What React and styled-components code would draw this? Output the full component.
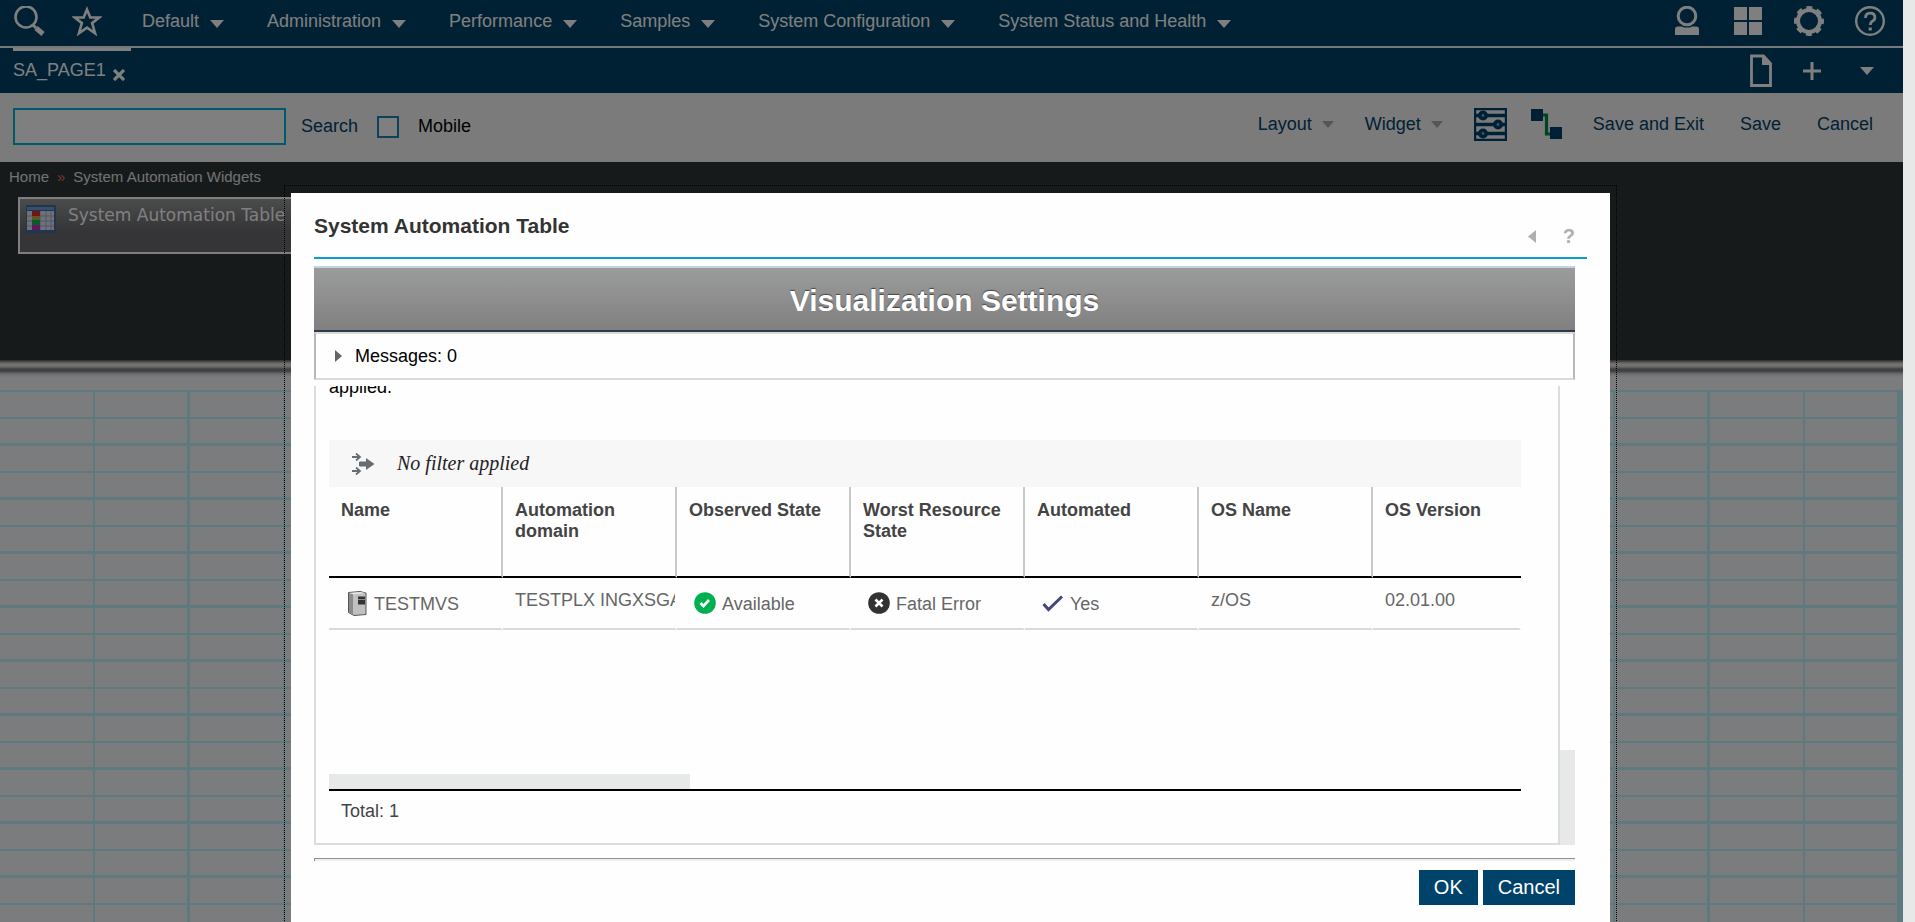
import React from 'react';
import styled, { createGlobalStyle } from 'styled-components';

const GlobalStyle = createGlobalStyle`
  * { box-sizing: border-box; }
  body {
    margin: 0;
    font-family: "Liberation Sans", Arial, sans-serif;
    font-size: 18px;
    line-height: 21px;
    color: #000;
  }
  button, input { font: inherit; color: inherit; margin: 0; }
  a { color: inherit; text-decoration: none; }
  svg { display: block; flex: none; }
`;

const Shell = styled.div`
  display: flex;
  height: 100vh;
  overflow: hidden;
`;

const Page = styled.div`
  position: relative;
  flex: 1;
  min-width: 0;
  display: flex;
  flex-direction: column;
  overflow: hidden;
`;

const PageScroll = styled.div`
  width: 12px;
  background: #e7e9e8;
`;

const PlainButton = styled.button`
  display: flex;
  align-items: center;
  gap: ${(p) => p.$gap || 0}px;
  padding: 0;
  border: 0;
  background: none;
  white-space: nowrap;
  line-height: 21px;
`;

const NavBar = styled.header`
  display: flex;
  align-items: flex-start;
  height: 48px;
  padding: 6px 18px 0 14px;
  background: #004266;
  border-bottom: 2px solid #eaf2f8;
  color: #fff;
`;

const QuickTools = styled.div`
  display: flex;
  gap: 27px;
  margin-right: 40px;
`;

const Menu = styled.nav`
  display: flex;
  gap: 43px;
  padding-top: 5px;
`;

const MenuButton = styled(PlainButton)`
  gap: 11px;
  svg { margin-top: 5px; }
`;

const NavIcons = styled.div`
  display: flex;
  gap: 31px;
  margin-left: auto;
`;

const NavIconButton = styled(PlainButton)`
  justify-content: center;
  width: 30px;
`;

const TabBar = styled.div`
  display: flex;
  align-items: flex-start;
  height: 45px;
  padding: 0 29px 0 13px;
  background: #004266;
  color: #fff;
`;

const Tab = styled.div`
  display: flex;
  align-items: flex-end;
  gap: 7px;
  width: 118px;
  padding-top: 9px;
  border-top: 3px solid #fff;
`;

const TabTools = styled.div`
  display: flex;
  align-items: center;
  gap: 31px;
  margin: 6px 0 0 auto;
`;

const TabMenuButton = styled(PlainButton)`
  margin-left: 8px;
`;

const Toolbar = styled.div`
  display: flex;
  align-items: center;
  height: 69px;
  padding: 0 30px 2px 13px;
  background: #f7f7f7;
  color: #00426b;
`;

const SearchInput = styled.input`
  width: 273px;
  height: 37px;
  border: 2px solid #00b4da;
  background: #fff;
`;

const SearchButton = styled(PlainButton)`
  margin: 0 19px 0 15px;
`;

const CheckLabel = styled.label`
  display: flex;
  align-items: center;
  gap: 19px;
  color: #000;
`;

const CheckInput = styled.input`
  appearance: none;
  width: 22px;
  height: 22px;
  border: 2px solid #1f82b4;
  background: #fff;
`;

const ToolbarEnd = styled.div`
  display: flex;
  align-items: center;
  gap: 31px;
  margin-left: auto;
  padding-bottom: 4px;
`;

const ToolIcons = styled.div`
  display: flex;
  gap: 24px;
`;

const SaveActions = styled.div`
  display: flex;
  gap: 36px;
`;

const Palette = styled.section`
  height: 198px;
  padding: 4px 0 0 9px;
  background: #2e3536;
  color: #fff;
`;

const Breadcrumb = styled.nav`
  display: flex;
  gap: 8px;
  font-size: 15px;
  line-height: 21px;
  color: #e4e4e4;
`;

const Chevrons = styled.span`
  color: #e86a6a;
`;

const WidgetCard = styled.button`
  display: flex;
  align-items: flex-start;
  gap: 12px;
  width: 290px;
  height: 57px;
  margin: 10px 0 0 9px;
  padding: 6px;
  border: 2px solid #fff;
  background: linear-gradient(#969898, #6a6b6e 60%);
  color: #fff;
  font-family: "DejaVu Sans", Verdana, sans-serif;
  font-size: 17px;
  white-space: nowrap;
`;

const Divider = styled.div`
  height: 30px;
  flex: none;
  background: linear-gradient(#5a5a5a 0, #7a7a7a 1px, #cfcaca 3px, #e8e2e2 4px, #e8e2e2 6px, #b0acac 8px, #808080 9px, #808080 11px, #dcdcdc 14px, #f7f8fc 17px);
`;

const Canvas = styled.main`
  --grid: #bff4ff;
  flex: 1;
  border-right: 4px solid var(--grid);
  background:
    linear-gradient(var(--grid) 0 3px, transparent 3px 28px, var(--grid) 28px 30px, transparent 30px) 0 -1px / 100% 54px,
    repeating-linear-gradient(90deg, transparent 0 93px, var(--grid) 93px 95px, transparent 95px 187px, var(--grid) 187px 190px),
    #f7f8fc;
`;

const Overlay = styled.div`
  position: absolute;
  inset: 0;
  padding: 185px 286px 0 284px;
  background: rgba(0, 0, 0, 0.5);
`;

const DialogFrame = styled.div`
  border: 1px dotted #000;
  border-bottom: 0;
  padding: 7px 6px 0;
`;

const Dialog = styled.section`
  display: flex;
  flex-direction: column;
  min-height: 760px;
  padding: 0 23px;
  background: #fefefe;
`;

const DialogHead = styled.header`
  display: flex;
  justify-content: space-between;
  height: 66px;
  padding: 20px 12px 0 0;
  border-bottom: 2px solid #0a9fcc;
`;

const DialogTitle = styled.h1`
  margin: 0;
  font-size: 21px;
  line-height: 26px;
  color: #333;
`;

const DialogTools = styled.div`
  display: flex;
  align-items: center;
  gap: 27px;
  height: 46px;
  color: #b0b0b0;
  font-size: 20px;
`;

const DialogBody = styled.div`
  margin: 7px 12px 0 0;
`;

const Banner = styled.h2`
  margin: 0;
  height: 66px;
  border-top: 2px solid #c6d2e0;
  border-bottom: 2px solid #2c3b4c;
  background: linear-gradient(#9a9c9b, #8e8e8e 50%, #808081);
  color: #fff;
  font-size: 30px;
  line-height: 66px;
  text-align: center;
  text-shadow: 0 -1px 1px #444;
`;

const Messages = styled.button`
  display: flex;
  align-items: center;
  gap: 13px;
  width: 100%;
  height: 48px;
  padding: 0 18px 0 19px;
  border: 2px solid;
  border-color: #dadada #b8b8b8;
  background: #fefefe;
`;

const ScrollArea = styled.div`
  display: flex;
  height: 459px;
  margin-top: 6px;
`;

const Pane = styled.div`
  flex: 1;
  min-width: 0;
  padding: 0 37px 0 13px;
  border: 2px solid #dcdcdc;
  border-top: 0;
  overflow: hidden;
`;

const PaneThumb = styled.div`
  align-self: flex-end;
  width: 15px;
  height: 95px;
  background: #e7e9e8;
`;

const Intro = styled.p`
  margin: -9px 0 0;
  height: 63px;
`;

const FilterBar = styled.div`
  display: flex;
  align-items: center;
  gap: 22px;
  height: 47px;
  padding-left: 23px;
  background: #f7f7f7;
  color: #222;
  font-family: Georgia, "Liberation Serif", serif;
  font-style: italic;
  font-size: 20px;
`;

const GridView = styled.div`
  display: flex;
  flex-direction: column;
  justify-content: space-between;
  height: 302px;
`;

const Table = styled.table`
  width: 100%;
  table-layout: fixed;
  border-collapse: separate;
  border-spacing: 0;
`;

const HeadCell = styled.th`
  width: ${(p) => (p.$last ? 'auto' : '174px')};
  height: 91px;
  padding: 13px 10px 0 12px;
  border-right: ${(p) => (p.$last ? 0 : '2px solid #c8c8c8')};
  border-bottom: 2px solid #000;
  vertical-align: top;
  text-align: left;
  color: #444;
`;

const Cell = styled.td`
  height: 52px;
  padding: 0 0 0 12px;
  border-right: 2px solid #fefefe;
  border-bottom: 2px solid #dadada;
  vertical-align: top;
  color: #666;
  overflow: hidden;
  white-space: nowrap;
`;

const CellText = styled.div`
  display: flex;
  align-items: center;
  height: 45px;
`;

const StatusContent = styled(CellText)`
  gap: 6px;
  height: 50px;
  padding-left: 5px;
  span { padding-top: 3px; }
`;

const SideThumb = styled.div`
  width: 361px;
  height: 15px;
  background: #e7e9e8;
`;

const Total = styled.div`
  padding: 10px 12px;
  border-top: 2px solid #000;
  color: #444;
`;

const Rule = styled.hr`
  margin: 13px 0 9px;
  height: 3px;
  border: 0;
  border-top: 1px solid #909090;
  border-left: 1px solid #909090;
  background: #eee;
`;

const Actions = styled.div`
  display: flex;
  justify-content: flex-end;
  gap: 5px;
`;

const ActionButton = styled.button`
  height: 35px;
  padding: 0 15px;
  border: 0;
  background: #00436a;
  color: #fff;
  font-size: 20px;
`;

const Caret = ({ w = 14, h = 8, color = 'currentColor' }) => (
  <svg width={w} height={h} viewBox="0 0 14 8" aria-hidden="true">
    <path d="M0 0H14L7 8Z" fill={color} />
  </svg>
);

const menus = ['Default', 'Administration', 'Performance', 'Samples', 'System Configuration', 'System Status and Health'];

const SearchIcon = () => (
  <svg width="31" height="30" viewBox="0 0 31 30" fill="none" stroke="currentColor">
    <circle cx="12" cy="11" r="10.5" strokeWidth="2.6" />
    <path d="M19 19l3 3" strokeWidth="3" />
    <path d="M22 22l7 6" strokeWidth="5" />
  </svg>
);
const StarIcon = () => (
  <svg width="30" height="30" viewBox="0 0 30 30" fill="none" stroke="currentColor" strokeWidth="2.6">
    <path d="M15 3.5l3.3 8h9l-7.2 5.6 3 10.2L15 21.6l-8.1 5.7 3-10.2L2.700 11.5h9z" />
  </svg>
);
const UserIcon = () => (
  <svg width="24" height="30" viewBox="0 0 24 30">
    <circle cx="12" cy="10" r="8.8" fill="none" stroke="currentColor" strokeWidth="3" />
    <path d="M0 29v-6q0-2.500 3-2.500h4l2 1h6l2-1h4q3 0 3 2.500v6z" fill="currentColor" />
  </svg>
);
const TilesIcon = () => (
  <svg width="28" height="30" viewBox="0 0 28 30" fill="currentColor">
    <path d="M0 1h13v13H0zM15 1h13v13H15zM0 16h13v13H0zM15 16h13v13H15z" />
  </svg>
);
const GearIcon = () => (
  <svg width="30" height="30" viewBox="0 0 30 30" fill="none" stroke="currentColor">
    <circle cx="15" cy="15" r="11" strokeWidth="4" />
    <circle cx="15" cy="15" r="13.2" strokeWidth="3.6" strokeDasharray="5.8 4.567" strokeDashoffset="2.9" />
  </svg>
);
const HelpIcon = () => (
  <svg width="30" height="30" viewBox="0 0 30 30" fill="none" stroke="currentColor">
    <circle cx="15" cy="15" r="13.8" strokeWidth="2.4" />
    <path d="M10.5 12q0-4.800 4.700-4.800t4.700 4.300q0 2.500-2.600 3.800-2 1.200-2 3.700" strokeWidth="2.8" />
    <path d="M13.600 21.500h3.200v3h-3.200z" fill="currentColor" stroke="none" />
  </svg>
);
const FileIcon = () => (
  <svg width="22" height="34" viewBox="0 0 22 34">
    <path d="M1.500 2h12l7 7.500V31.500h-19z" fill="none" stroke="currentColor" strokeWidth="2.8" />
    <path d="M12 1h2l7 8v2h-9z" fill="currentColor" />
  </svg>
);
const PlusIcon = () => (
  <svg width="18" height="18" viewBox="0 0 18 18" stroke="currentColor" strokeWidth="3">
    <path d="M9 0v18M0 9h18" />
  </svg>
);
const CloseIcon = () => (
  <svg width="12" height="12" viewBox="0 0 12 12" stroke="currentColor" strokeWidth="3.2">
    <path d="M1 1l10 10M11 1L1 11" />
  </svg>
);
const SlidersIcon = () => (
  <svg width="33" height="33" viewBox="0 0 33 33" fill="none" stroke="currentColor">
    <path d="M1 1h31v31H1z" strokeWidth="2.4" />
    <path d="M2 7.500h29M2 16.500h29M2 25.500h29" strokeWidth="3.4" />
    <circle cx="9" cy="7.500" r="3.2" strokeWidth="3.6" fill="#80a8c0" />
    <circle cx="24" cy="16.500" r="3.2" strokeWidth="3.6" fill="#80a8c0" />
    <circle cx="9" cy="25.500" r="3.2" strokeWidth="3.6" fill="#80a8c0" />
  </svg>
);
const WireIcon = () => (
  <svg width="31" height="31" viewBox="0 0 31 31">
    <path d="M12 6h3.500v19H20" fill="none" stroke="#008a46" strokeWidth="3.2" />
    <path d="M0 0h12v12H0zM19 18h12v12H19z" fill="currentColor" />
  </svg>
);
const TableIcon = () => (
  <svg width="30" height="28" viewBox="0 0 30 28">
    <rect x="0" y="0" width="30" height="28" rx="1" fill="#426a98" />
    <path d="M1 2h27v3H1z" fill="#6c9fdc" />
    <path d="M1 6h27v19H1z" fill="#dfe4f4" />
    <path d="M1 11h27M1 16h27M1 21h27M14 6v19M20 6v19M25 6v19" stroke="#a4acc8" strokeWidth="1" />
    <path d="M6 6h8v5H6z" fill="#e02828" />
    <path d="M6 11h8v4H6z" fill="#b8b040" />
    <path d="M6 15h8v5H6z" fill="#10b84c" />
    <path d="M6 20h8v5H6z" fill="#c828c0" />
  </svg>
);
const FilterIcon = () => (
  <svg width="23" height="22" viewBox="0 0 23 22" fill="none" stroke="#666c70">
    <path d="M0 4h7M0 18h7" strokeWidth="2" />
    <path d="M4 0.500l4 3.500-4 3.500M4 14.500l4 3.500-4 3.500" strokeWidth="1.8" />
    <path d="M7 9.500q0-1 1-1h6V5l8.500 6-8.500 6v-3.500H8q-1 0-1-1z" fill="#666c70" stroke="none" />
  </svg>
);
const ServerIcon = () => (
  <svg width="22" height="25" viewBox="-2 0 22 25">
    <path d="M0.500 1.500L12 0.500l6 1.500v21.500L6 24.500 0.500 21.500z" fill="#c0c0c0" stroke="#555" />
    <path d="M1 2l4 1v20.500l-4-2z" fill="#8c8c8c" />
    <path d="M1 2l11-1 5.500 1L6 3.500z" fill="#e4e4e4" />
    <path d="M10 5.500h7v8h-7z" fill="#333" />
    <path d="M10 8.500h7" stroke="#8a8a8a" />
  </svg>
);
const StatusIcon = ({ ok }) => (
  <svg width="22" height="22" viewBox="0 0 22 22" fill="none" stroke="#fff">
    <circle cx="11" cy="11" r="10.8" fill={ok ? '#00b050' : '#323232'} stroke="none" />
    <path d={ok ? 'M6.500 11l3 3 5.500-6' : 'M7.500 7.500l7 7M14.500 7.500l-7 7'} strokeWidth="2.6" />
  </svg>
);
const CheckIcon = () => (
  <svg width="22" height="22" viewBox="0 0 22 22" fill="none" stroke="#46467a" strokeWidth="3">
    <path d="M1.500 12l5 5.500L20 4.500" />
  </svg>
);

const columns = ['Name', 'Automation domain', 'Observed State', 'Worst Resource State', 'Automated', 'OS Name', 'OS Version'];
const cells = [
  { text: 'TESTMVS', icon: <ServerIcon /> },
  { text: 'TESTPLX INGXSGA0' },
  { text: 'Available', icon: <StatusIcon ok /> },
  { text: 'Fatal Error', icon: <StatusIcon /> },
  { text: 'Yes', icon: <CheckIcon /> },
  { text: 'z/OS' },
  { text: '02.01.00' },
];

export default function App() {
  return (
    <Shell>
      <GlobalStyle />
      <Page>
        <NavBar>
          <QuickTools>
            <PlainButton aria-label="Search"><SearchIcon /></PlainButton>
            <PlainButton aria-label="Favorites"><StarIcon /></PlainButton>
          </QuickTools>
          <Menu>
            {menus.map((name) => (
              <MenuButton key={name}>{name}<Caret /></MenuButton>
            ))}
          </Menu>
          <NavIcons>
            <NavIconButton aria-label="User"><UserIcon /></NavIconButton>
            <NavIconButton aria-label="Dashboards"><TilesIcon /></NavIconButton>
            <NavIconButton aria-label="Settings"><GearIcon /></NavIconButton>
            <NavIconButton aria-label="Help"><HelpIcon /></NavIconButton>
          </NavIcons>
        </NavBar>
        <TabBar>
          <Tab>
            <span>SA_PAGE1</span>
            <PlainButton aria-label="Close tab"><CloseIcon /></PlainButton>
          </Tab>
          <TabTools>
            <PlainButton aria-label="New page"><FileIcon /></PlainButton>
            <PlainButton aria-label="Add"><PlusIcon /></PlainButton>
            <TabMenuButton aria-label="More"><Caret /></TabMenuButton>
          </TabTools>
        </TabBar>
        <Toolbar>
          <SearchInput type="text" aria-label="Search widgets" />
          <SearchButton>Search</SearchButton>
          <CheckLabel><CheckInput type="checkbox" />Mobile</CheckLabel>
          <ToolbarEnd>
            <PlainButton $gap={10}>Layout<Caret w={12} h={7} color="#aaa" /></PlainButton>
            <PlainButton $gap={10}>Widget<Caret w={12} h={7} color="#aaa" /></PlainButton>
            <ToolIcons>
              <PlainButton aria-label="Preferences"><SlidersIcon /></PlainButton>
              <PlainButton aria-label="Wiring"><WireIcon /></PlainButton>
            </ToolIcons>
            <SaveActions>
              <PlainButton>Save and Exit</PlainButton>
              <PlainButton>Save</PlainButton>
              <PlainButton>Cancel</PlainButton>
            </SaveActions>
          </ToolbarEnd>
        </Toolbar>
        <Palette>
          <Breadcrumb>
            <a href="#home">Home</a>
            <Chevrons>»</Chevrons>
            <a href="#widgets">System Automation Widgets</a>
          </Breadcrumb>
          <WidgetCard><TableIcon />System Automation Table</WidgetCard>
        </Palette>
        <Divider />
        <Canvas />
        <Overlay>
          <DialogFrame>
            <Dialog role="dialog" aria-labelledby="dialog-title">
              <DialogHead>
                <DialogTitle id="dialog-title">System Automation Table</DialogTitle>
                <DialogTools>
                  <PlainButton aria-label="Collapse">
                    <svg width="8" height="13" viewBox="0 0 8 13"><path d="M8 0v13L0 6.500z" fill="#b0b0b0" /></svg>
                  </PlainButton>
                  <PlainButton aria-label="Dialog help"><b>?</b></PlainButton>
                </DialogTools>
              </DialogHead>
              <DialogBody>
                <Banner>Visualization Settings</Banner>
                <Messages>
                  <svg width="7" height="12" viewBox="0 0 7 12"><path d="M0 0l7 6-7 6z" fill="#666" /></svg>
                  Messages: 0
                </Messages>
                <ScrollArea>
                  <Pane>
                    <Intro>applied.</Intro>
                    <FilterBar><FilterIcon />No filter applied</FilterBar>
                    <GridView>
                      <Table>
                        <thead>
                          <tr>
                            {columns.map((name, i) => (
                              <HeadCell key={name} $last={i === columns.length - 1}>{name}</HeadCell>
                            ))}
                          </tr>
                        </thead>
                        <tbody>
                          <tr>
                            {cells.map(({ text, icon }) => (
                              <Cell key={text}>
                                {icon
                                  ? <StatusContent>{icon}<span>{text}</span></StatusContent>
                                  : <CellText>{text}</CellText>}
                              </Cell>
                            ))}
                          </tr>
                        </tbody>
                      </Table>
                      <SideThumb />
                    </GridView>
                    <Total>Total: 1</Total>
                  </Pane>
                  <PaneThumb />
                </ScrollArea>
                <Rule />
                <Actions>
                  <ActionButton>OK</ActionButton>
                  <ActionButton>Cancel</ActionButton>
                </Actions>
              </DialogBody>
            </Dialog>
          </DialogFrame>
        </Overlay>
      </Page>
      <PageScroll />
    </Shell>
  );
}
